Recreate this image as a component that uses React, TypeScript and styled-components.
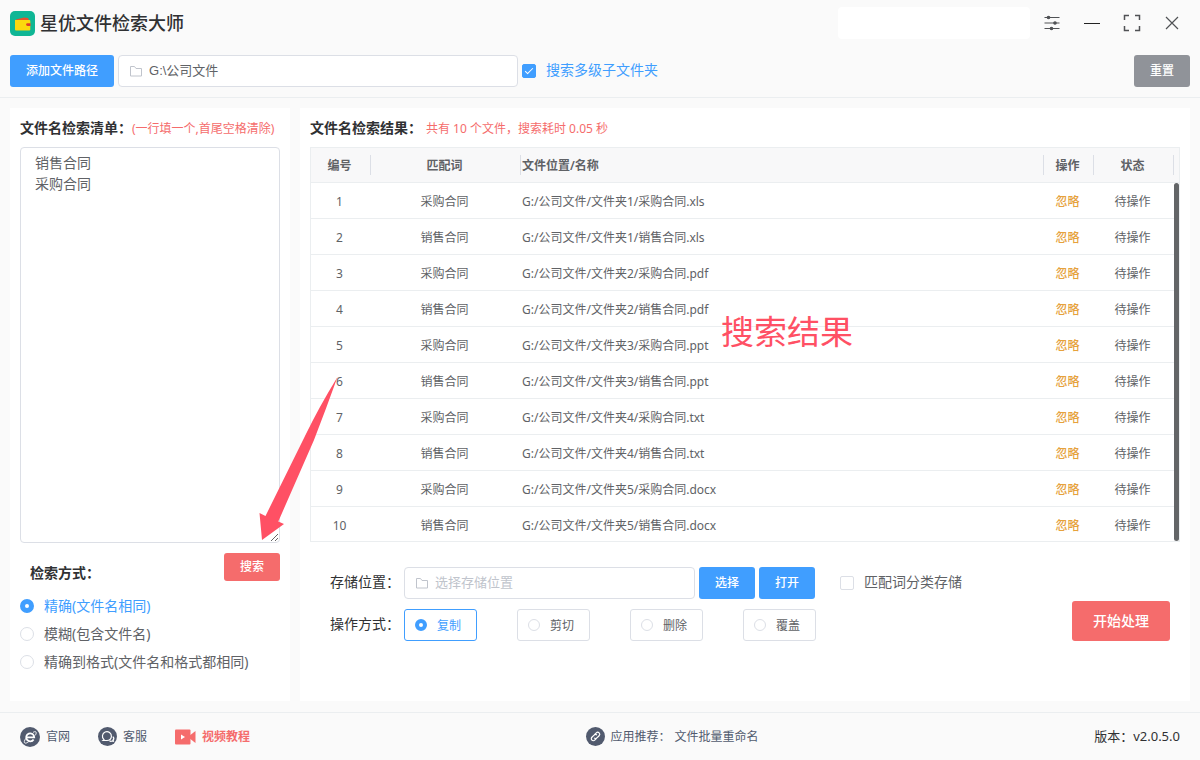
import React, { useState } from "react";
import styled, { createGlobalStyle } from "styled-components";

const blue = "#409eff";
const red = "#f56c6c";
const border = "#dcdfe6";
const line = "#ebeef0";

const GlobalStyle = createGlobalStyle`
  *, *::before, *::after { box-sizing: border-box; }
  body {
    margin: 0;
    background: #fafafa;
    color: #606266;
    font: 14px/20px "Noto Sans", "Noto Sans CJK SC", sans-serif;
  }
  button, input, textarea { font-family: inherit; margin: 0; }
`;

const Window = styled.div`
  display: flex;
  flex-direction: column;
  min-height: 100vh;
`;

const TitleBar = styled.header`
  display: flex;
  align-items: center;
  height: 46px;
  padding: 0 16px 0 10px;
`;

const AppName = styled.h1`
  flex: 1;
  margin: 0 0 0 5px;
  font-size: 18px;
  line-height: 24px;
  font-weight: 500;
  color: #303133;
`;

const AccountBox = styled.div`
  width: 192px;
  height: 32px;
  margin-right: 10px;
  border-radius: 4px;
  background: #fff;
`;

const WindowControls = styled.div`
  display: flex;
  gap: 16px;
`;

const IconButton = styled.button`
  display: flex;
  align-items: center;
  justify-content: center;
  width: 24px;
  height: 24px;
  padding: 0;
  border: 0;
  background: none;
  color: #505255;
`;

const Toolbar = styled.div`
  display: flex;
  align-items: center;
  gap: 4px;
  padding: 9px 10px 10px;
  border-bottom: 1px solid ${line};
`;

const Button = styled.button<{ $tone: string; $size?: "small" | "large" }>`
  height: ${(p) => (p.$size === "large" ? 40 : p.$size === "small" ? 28 : 32)}px;
  padding: 0 ${(p) => (p.$size === "large" ? 21 : 16)}px;
  border: 0;
  border-radius: 3px;
  background: ${(p) => p.$tone};
  color: #fff;
  font-size: ${(p) => (p.$size === "large" ? 14 : 12)}px;
  font-weight: 500;
  line-height: 20px;
  white-space: nowrap;
`;

const Field = styled.label<{ $width: number }>`
  display: flex;
  align-items: center;
  gap: 6px;
  flex: 0 1 ${(p) => p.$width}px;
  height: 32px;
  padding: 0 10px;
  border: 1px solid ${border};
  border-radius: 4px;
  background: #fff;
  color: #c0c4cc;

  input {
    flex: 1;
    min-width: 0;
    padding: 0;
    border: 0;
    outline: 0;
    background: none;
    color: #606266;
    font: 13px/20px "Liberation Sans", "Noto Sans CJK SC", sans-serif;
  }
  input::placeholder { color: #c0c4cc; opacity: 1; }
`;

const Check = styled.label<{ $on: boolean }>`
  display: flex;
  align-items: center;
  gap: 10px;
  color: ${(p) => (p.$on ? blue : "#606266")};

  input {
    appearance: none;
    width: 14px;
    height: 14px;
    border: 1px solid ${(p) => (p.$on ? blue : border)};
    border-radius: 2px;
    background: ${(p) => (p.$on ? blue : "#fff")};
    display: grid;
    place-items: center;
  }
  input:checked::after {
    content: "";
    width: 4px;
    height: 8px;
    margin-bottom: 2px;
    border: solid #fff;
    border-width: 0 1px 1px 0;
    transform: rotate(45deg);
  }
`;

const CheckText = styled.span`
  padding-bottom: 2px;
`;

const Spacer = styled.div`
  flex: 1;
`;

const Main = styled.main`
  flex: 1;
  display: flex;
  gap: 10px;
  padding: 10px 10px 11px;
`;

const ListPanel = styled.section`
  flex: none;
  width: 280px;
  padding: 0 10px 25px;
  background: #fff;
`;

const ResultPanel = styled.section`
  position: relative;
  flex: 1;
  min-width: 0;
  padding: 0 10px 25px;
  background: #fff;
`;

const PanelHead = styled.div`
  display: flex;
  align-items: center;
  height: 39px;
  white-space: nowrap;
`;

const PanelTitle = styled.h2`
  margin: 0;
  font-size: 14px;
  line-height: 20px;
  font-weight: 600;
  color: #303133;
`;

const Hint = styled.span<{ $gap?: number }>`
  padding-top: 2px;
  margin-left: ${(p) => p.$gap ?? 0}px;
  font-size: 12px;
  color: ${red};
`;

const Words = styled.textarea`
  display: block;
  width: 100%;
  height: 396px;
  padding: 4px 14px;
  border: 1px solid ${border};
  border-radius: 4px;
  outline: 0;
  background: #fff;
  color: #606266;
  font-size: 14px;
  line-height: 21px;
  resize: vertical;
`;

const SearchRow = styled.div`
  display: flex;
  justify-content: space-between;
  align-items: flex-start;
  margin: 10px 0 9px;
`;

const ModeTitle = styled.h2`
  margin: 10px 0 0 10px;
  font-size: 14px;
  line-height: 20px;
  font-weight: 600;
  color: #303133;
`;

const Radio = styled.label<{ $on: boolean; $boxed?: boolean }>`
  display: flex;
  align-items: center;
  gap: 10px;
  height: ${(p) => (p.$boxed ? 32 : 28)}px;
  padding: ${(p) => (p.$boxed ? "0 15px 0 10px" : "0")};
  border: ${(p) => (p.$boxed ? `1px solid ${p.$on ? blue : border}` : "0")};
  border-radius: 3px;
  font-size: ${(p) => (p.$boxed ? 12 : 14)}px;
  line-height: 20px;
  color: ${(p) => (p.$on ? blue : "#606266")};
  white-space: nowrap;

  input {
    appearance: none;
    flex: none;
    width: ${(p) => (p.$boxed ? 12 : 14)}px;
    height: ${(p) => (p.$boxed ? 12 : 14)}px;
    border: ${(p) => (p.$on ? `${p.$boxed ? 4 : 5}px solid ${blue}` : `1px solid ${border}`)};
    border-radius: 50%;
    background: #fff;
  }
  span { padding-top: ${(p) => (p.$boxed ? 2 : 0)}px; }
`;

const TableBox = styled.div`
  position: relative;
  height: 395px;
  overflow: hidden;
  border: 1px solid ${line};
`;

const Table = styled.table`
  width: 100%;
  table-layout: fixed;
  border-collapse: separate;
  border-spacing: 0;
  font-size: 12px;
  line-height: 20px;

  th {
    height: 35px;
    padding: 0;
    border-bottom: 1px solid ${line};
    background: #f8f8f9;
    font-weight: 600;
  }
  td {
    height: 36px;
    padding: 2px 3px 0 0;
    border-bottom: 1px solid ${line};
    text-align: center;
  }
  th:nth-child(3), td:nth-child(3) { text-align: left; }
  td:last-child { padding: 0; border-bottom: 0; }
`;

const HeadCell = styled.div`
  height: 20px;
  padding: 0 3px 0 1px;
  border-right: 1px solid ${border};
  line-height: 22px;
`;

const IgnoreButton = styled.button`
  padding: 0;
  border: 0;
  background: none;
  color: #e6a23c;
  font-size: 12px;
  font-weight: 500;
  line-height: 20px;
`;

const PathText = styled.div`
  padding-left: 1px;
  overflow: hidden;
  white-space: nowrap;
  text-overflow: ellipsis;
`;

const ScrollThumb = styled.div`
  position: absolute;
  top: 35px;
  right: 0;
  bottom: 0;
  width: 5px;
  border-radius: 3px;
  background: #636567;
`;

const ArrowNote = styled.svg`
  position: absolute;
  left: -41px;
  top: 268px;
  pointer-events: none;
`;

const TextNote = styled.div`
  position: absolute;
  left: 410px;
  top: 164px;
  font-size: 33px;
  line-height: 40px;
  color: #ff5064;
  white-space: nowrap;
  pointer-events: none;
`;

const Actions = styled.div`
  display: flex;
  justify-content: space-between;
  align-items: flex-end;
  padding: 25px 10px 0 20px;
`;

const ActionRows = styled.div`
  display: flex;
  flex-direction: column;
  gap: 10px;
  flex: 1;
`;

const ActionRow = styled.div`
  display: flex;
  align-items: center;
  gap: 4px;
`;

const RowLabel = styled.span`
  width: 70px;
  padding-bottom: 2px;
  color: #303133;
  white-space: nowrap;
`;

const BoxedRadios = styled.div`
  display: flex;
  gap: 40px;
`;

const CheckSlot = styled.div`
  margin-left: 21px;
`;

const Footer = styled.footer`
  display: flex;
  justify-content: space-between;
  align-items: center;
  height: 48px;
  padding: 0 20px;
  border-top: 1px solid ${line};
  font-size: 12px;
`;

const FooterLinks = styled.nav`
  display: flex;
  gap: 28px;
`;

const FooterLink = styled.a<{ $hot?: boolean }>`
  display: flex;
  align-items: center;
  gap: 6px;
  color: ${(p) => (p.$hot ? red : "#515a6e")};
  font-weight: ${(p) => (p.$hot ? 600 : 400)};
  text-decoration: none;
`;

const Recommend = styled.div`
  display: flex;
  align-items: center;
  gap: 4px;
  color: #515a6e;
`;

const Version = styled.span`
  padding-bottom: 2px;
  font-size: 13px;
  color: #303133;
`;

const Logo = () => (
  <svg width="25" height="25" viewBox="0 0 25 25" aria-hidden="true">
    <rect width="25" height="25" rx="5" fill="#0fb695" />
    <path d="M6 8.5 14 6.5l4 .5 1 2H6z" fill="#e8502e" />
    <path d="M5 8.4q0 .7 1 .7h13.3q1 0 1 1v8.4q0 1-1 1H6q-1 0-1-1z" fill="#fcd80d" />
    <path d="M20.5 12.200h-3a1.400 1.400 0 0 0 0 2.800h3z" fill="#e0392b" />
  </svg>
);

const FolderIcon = () => (
  <svg width="14" height="14" viewBox="0 0 14 14" fill="none" stroke="currentColor" aria-hidden="true">
    <path d="M1.500 2.500h4l1.500 2h5.500v7.500h-11z" />
  </svg>
);

const SettingsIcon = () => (
  <svg width="16" height="16" viewBox="0 0 16 16" stroke="currentColor" strokeWidth="1.200" fill="currentColor">
    <path d="M.5 2.500h15M.5 8h15M.5 13.500h15" />
    <circle cx="4.500" cy="2.500" r="1.200" />
    <circle cx="11" cy="8" r="1.200" />
    <circle cx="7.500" cy="13.500" r="1.200" />
  </svg>
);

const MinimizeIcon = () => (
  <svg width="16" height="16" viewBox="0 0 16 16" stroke="#222" strokeWidth="1">
    <path d="M0 8.500h16" />
  </svg>
);

const MaximizeIcon = () => (
  <svg width="18" height="18" viewBox="0 0 18 18" fill="none" stroke="currentColor" strokeWidth="1.500">
    <path d="M1.500 6V1.500H6M12 1.500h4.500V6M16.500 12v4.500H12M6 16.500H1.500V12" />
  </svg>
);

const CloseIcon = () => (
  <svg width="14" height="14" viewBox="0 0 14 14" stroke="currentColor" strokeWidth="1.200">
    <path d="m1 1 12 12M13 1 1 13" />
  </svg>
);

const SiteIcon = () => (
  <svg width="20" height="20" viewBox="0 0 20 20" fill="none" aria-hidden="true">
    <circle cx="10" cy="10" r="10" fill="#515a6e" />
    <path d="M6.800 10.300h7.400a4 4 0 1 0-.6 2.200" stroke="#fff" strokeWidth="1.800" />
    <path d="M13 5.400c2-1.200 3.400-1 3.200.7-.1.800-.5 1.500-1 2.300M6 11.200c-1.800 2.500-2.300 4.600-.9 4.900 1 .2 2.300-.4 3.500-1.300" stroke="#fff" strokeWidth=".9" />
  </svg>
);

const ServiceIcon = () => (
  <svg width="19" height="19" viewBox="0 0 19 19" fill="none" stroke="#fff" strokeWidth="1.200" aria-hidden="true">
    <circle cx="9.500" cy="9.500" r="9.500" fill="#515a6e" stroke="none" />
    <path d="M6 12.600A4.500 4.500 0 1 1 13.400 9.500a4.500 4.500 0 0 1-4.500 4H5z" />
    <path d="M14.800 9.600c1.100 1 1.200 2.400.3 3.400l.3 1.300-1.300-.3c-.9.400-1.900.300-2.600-.2" />
  </svg>
);

const VideoIcon = () => (
  <svg width="21" height="16" viewBox="0 0 21 16" aria-hidden="true">
    <rect y=".5" width="15.500" height="15" rx="1" fill={red} />
    <path d="M15 6.200 20.500 2v12L15 9.800z" fill={red} />
    <path d="M6 5.500v5l4-2.500z" fill="#fff" />
  </svg>
);

const LinkIcon = () => (
  <svg width="19" height="19" viewBox="0 0 19 19" aria-hidden="true">
    <circle cx="9.500" cy="9.500" r="9.500" fill="#515a6e" />
    <g fill="none" stroke="#fff" strokeWidth="1.200" transform="rotate(-45 9.500 9.500)">
      <path d="M9 11.500H6.400a2 2 0 0 1 0-4h3.100a2 2 0 0 1 2 2" />
      <path d="M10 7.500h2.600a2 2 0 0 1 0 4H9.500a2 2 0 0 1-2-2" />
    </g>
  </svg>
);

const extensions = ["xls", "pdf", "ppt", "txt", "docx"];
const results = extensions.flatMap((ext, i) =>
  ["采购合同", "销售合同"].map((word) => ({
    word,
    path: `G:/公司文件/文件夹${i + 1}/${word}.${ext}`,
  }))
);

const modes = ["精确(文件名相同)", "模糊(包含文件名)", "精确到格式(文件名和格式都相同)"];
const operations = ["复制", "剪切", "删除", "覆盖"];

export default function App() {
  const [deep, setDeep] = useState(true);
  const [classify, setClassify] = useState(false);
  const [mode, setMode] = useState(modes[0]);
  const [operation, setOperation] = useState(operations[0]);

  return (
    <Window lang="zh-CN">
      <GlobalStyle />
      <TitleBar>
        <Logo />
        <AppName>星优文件检索大师</AppName>
        <AccountBox />
        <WindowControls>
          <IconButton aria-label="设置"><SettingsIcon /></IconButton>
          <IconButton aria-label="最小化"><MinimizeIcon /></IconButton>
          <IconButton aria-label="最大化"><MaximizeIcon /></IconButton>
          <IconButton aria-label="关闭"><CloseIcon /></IconButton>
        </WindowControls>
      </TitleBar>

      <Toolbar>
        <Button $tone={blue}>添加文件路径</Button>
        <Field $width={400}>
          <FolderIcon />
          <input aria-label="文件路径" defaultValue="G:\公司文件" />
        </Field>
        <Check $on={deep}>
          <input type="checkbox" checked={deep} onChange={() => setDeep(!deep)} />
          <CheckText>搜索多级子文件夹</CheckText>
        </Check>
        <Spacer />
        <Button $tone="#909399">重置</Button>
      </Toolbar>

      <Main>
        <ListPanel>
          <PanelHead>
            <PanelTitle>文件名检索清单：</PanelTitle>
            <Hint>(一行填一个,首尾空格清除)</Hint>
          </PanelHead>
          <Words aria-label="文件名检索清单" defaultValue={"销售合同\n采购合同"} />
          <SearchRow>
            <ModeTitle>检索方式：</ModeTitle>
            <Button $tone={red} $size="small">搜索</Button>
          </SearchRow>
          {modes.map((m) => (
            <Radio key={m} $on={m === mode}>
              <input type="radio" name="mode" checked={m === mode} onChange={() => setMode(m)} />
              <span>{m}</span>
            </Radio>
          ))}
        </ListPanel>

        <ResultPanel>
          <PanelHead>
            <PanelTitle>文件名检索结果：</PanelTitle>
            <Hint $gap={4}>共有 10 个文件，搜索耗时 0.05 秒</Hint>
          </PanelHead>
          <TableBox>
            <Table>
              <colgroup>
                <col width="60" />
                <col width="150" />
                <col />
                <col width="50" />
                <col width="80" />
                <col width="5" />
              </colgroup>
              <thead>
                <tr>
                  <th><HeadCell>编号</HeadCell></th>
                  <th><HeadCell>匹配词</HeadCell></th>
                  <th><HeadCell>文件位置/名称</HeadCell></th>
                  <th><HeadCell>操作</HeadCell></th>
                  <th><HeadCell>状态</HeadCell></th>
                  <th />
                </tr>
              </thead>
              <tbody>
                {results.map((r, i) => (
                  <tr key={r.path}>
                    <td>{i + 1}</td>
                    <td>{r.word}</td>
                    <td><PathText>{r.path}</PathText></td>
                    <td><IgnoreButton>忽略</IgnoreButton></td>
                    <td>待操作</td>
                    <td />
                  </tr>
                ))}
              </tbody>
            </Table>
            <ScrollThumb />
            <TextNote>搜索结果</TextNote>
          </TableBox>

          <Actions>
            <ActionRows>
              <ActionRow>
                <RowLabel>存储位置：</RowLabel>
                <Field $width={291}>
                  <FolderIcon />
                  <input aria-label="存储位置" placeholder="选择存储位置" />
                </Field>
                <Button $tone={blue}>选择</Button>
                <Button $tone={blue}>打开</Button>
                <CheckSlot>
                  <Check $on={classify}>
                    <input type="checkbox" checked={classify} onChange={() => setClassify(!classify)} />
                    <CheckText>匹配词分类存储</CheckText>
                  </Check>
                </CheckSlot>
              </ActionRow>
              <ActionRow>
                <RowLabel>操作方式：</RowLabel>
                <BoxedRadios>
                  {operations.map((o) => (
                    <Radio key={o} $boxed $on={o === operation}>
                      <input type="radio" name="operation" checked={o === operation} onChange={() => setOperation(o)} />
                      <span>{o}</span>
                    </Radio>
                  ))}
                </BoxedRadios>
              </ActionRow>
            </ActionRows>
            <Button $tone={red} $size="large">开始处理</Button>
          </Actions>

          <ArrowNote width="82" height="166" viewBox="0 0 82 166" aria-hidden="true">
            <path d="M78.500 1Q60 31 46 60L6.500 140 .5 137 3 164 25 148 19.300 145.500 55 64Q67 33 78.500 1z" fill="#ff5064" />
          </ArrowNote>
        </ResultPanel>
      </Main>

      <Footer>
        <FooterLinks>
          <FooterLink href="#site"><SiteIcon />官网</FooterLink>
          <FooterLink href="#service"><ServiceIcon />客服</FooterLink>
          <FooterLink href="#video" $hot><VideoIcon />视频教程</FooterLink>
        </FooterLinks>
        <Recommend>
          <FooterLink href="#apps"><LinkIcon />应用推荐：</FooterLink>
          <FooterLink href="#rename">文件批量重命名</FooterLink>
        </Recommend>
        <Version>版本：v2.0.5.0</Version>
      </Footer>
    </Window>
  );
}
